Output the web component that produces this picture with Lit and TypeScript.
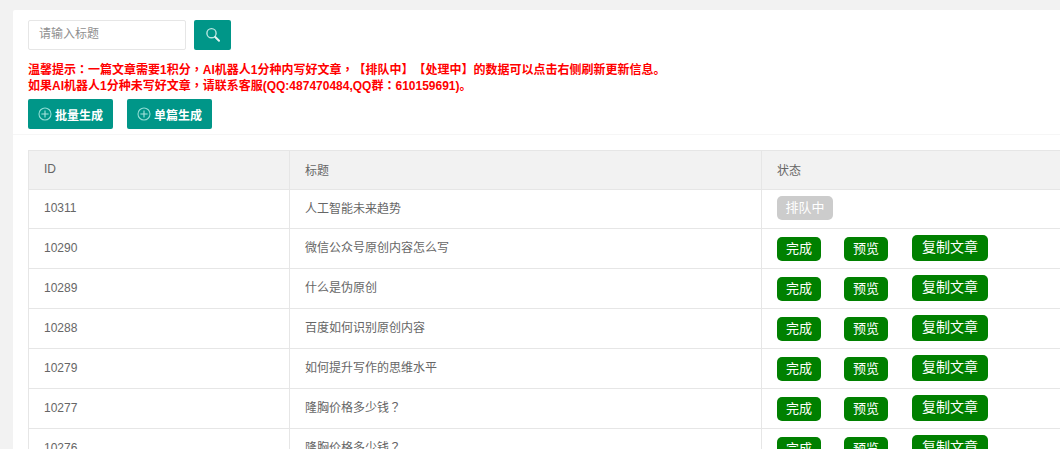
import { LitElement, html, css, svg } from "lit";
import { customElement } from "lit/decorators.js";

const rows: [string, string, boolean][] = [
  ["10311", "人工智能未来趋势", false],
  ["10290", "微信公众号原创内容怎么写", true],
  ["10289", "什么是伪原创", true],
  ["10288", "百度如何识别原创内容", true],
  ["10279", "如何提升写作的思维水平", true],
  ["10277", "隆胸价格多少钱", true],
  ["10276", "隆胸价格多少钱", true],
];

const plus = svg`<circle cx="7" cy="7" r="6" fill="none" stroke="#8fdcd4" stroke-width="1.1"/><path d="M7 3.4v7.2M3.4 7h7.2" stroke="#a8e4de" stroke-width="1.1"/>`;

@customElement("app-root")
export class AppRoot extends LitElement {
  static styles = css`
    :host {
      display: block;
      height: 449px;
      overflow: hidden;
      background: #f2f2f2;
      font-family: "Liberation Sans", "Noto Sans CJK SC", sans-serif;
      font-size: 12px;
      color: #666;
      text-spacing-trim: space-all;
    }
    .p { font-family: "Noto Sans CJK TC", sans-serif; line-height: 0; }
    .card {
      margin: 10px 0 0 13px;
      background: #fff;
      border-radius: 2px 0 0 0;
      height: 439px;
      overflow: hidden;
    }
    .head {
      padding: 10px 15px 5px;
      border-bottom: 1px solid #f6f6f6;
    }
    .search { display: flex; gap: 8px; }
    .input {
      box-sizing: border-box;
      width: 158px;
      height: 30px;
      padding-left: 10px;
      border: 1px solid #e6e6e6;
      border-radius: 2px;
      line-height: 27px;
      color: #8f8f8f;
    }
    .sbtn {
      width: 37px;
      height: 30px;
      background: #009688;
      border-radius: 2px;
      display: flex;
      align-items: center;
      justify-content: center;
    }
    .tip {
      margin: 12px 0 0;
      color: #f00;
      font-weight: bold;
      line-height: 16px;
      white-space: nowrap;
    }
    .actions { display: flex; gap: 14px; margin-top: 5px; }
    .add {
      box-sizing: border-box;
      width: 85px;
      height: 30px;
      background: #009688;
      border-radius: 2px;
      color: #fff;
      font-weight: bold;
      display: flex;
      align-items: center;
      padding-left: 10px;
      gap: 3px;
    }
    .add svg { flex: none; }
    .wrap { padding: 15px 0 0 15px; }
    table {
      width: 1100px;
      table-layout: fixed;
      border-collapse: collapse;
    }
    th, td {
      box-sizing: border-box;
      border: 1px solid #e6e6e6;
      padding: 0 15px 2px;
      text-align: left;
      font-weight: normal;
      white-space: nowrap;
    }
    th { background: #f2f2f2; height: 39px; }
    td { height: 40px; }
    tr.first td { height: 39px; }
    td.title { padding-bottom: 4px; }
    .ops { display: flex; align-items: flex-end; }
    .chip {
      box-sizing: border-box;
      height: 24px;
      width: 44px;
      border-radius: 5px;
      background: #008000;
      color: #fff;
      font-size: 13px;
      line-height: 24px;
      text-align: center;
    }
    .chip.gap { margin-left: 23px; }
    .chip.copy {
      width: 76px;
      height: 26px;
      line-height: 25px;
      font-size: 14px;
      margin-left: 24px;
    }
    .chip.wait { width: 56px; background: #ccc; }
  `;

  render() {
    return html`
      <div class="card">
        <div class="head">
          <div class="search">
            <div class="input">请输入标题</div>
            <div class="sbtn">
              <svg width="16" height="16" viewBox="0 0 16 16">
                <circle cx="6.5" cy="6.2" r="4.6" fill="none" stroke="#b8e6e1" stroke-width="1.4"/>
                <path d="M10.2 10 14 13.8" stroke="#e4f4f2" stroke-width="2" stroke-linecap="round"/>
              </svg>
            </div>
          </div>
          <p class="tip">温馨提示<span class="p">：</span>一篇文章需要1积分<span class="p">，</span>AI机器人1分种内写好文章<span class="p">，</span>【排队中】【处理中】的数据可以点击右侧刷新更新信息。<br />如果AI机器人1分种未写好文章<span class="p">，</span>请联系客服(QQ:487470484,QQ群<span class="p">：</span>610159691)。</p>
          <div class="actions">
            <div class="add"><svg width="14" height="14" viewBox="0 0 14 14">${plus}</svg>批量生成</div>
            <div class="add"><svg width="14" height="14" viewBox="0 0 14 14">${plus}</svg>单篇生成</div>
          </div>
        </div>
        <div class="wrap">
          <table>
            <colgroup><col style="width:261px" /><col style="width:472px" /><col /></colgroup>
            <thead><tr><th>ID</th><th>标题</th><th>状态</th></tr></thead>
            <tbody>
              ${rows.map(
                ([id, title, done], i) => html`
                  <tr class=${i === 0 ? "first" : ""}>
                    <td>${id}</td>
                    <td class="title">${title}${i >= 5 ? html`<span class="p">？</span>` : ""}</td>
                    <td>
                      ${done
                        ? html`<div class="ops">
                            <span class="chip">完成</span>
                            <span class="chip gap">预览</span>
                            <span class="chip copy">复制文章</span>
                          </div>`
                        : html`<div class="ops"><span class="chip wait">排队中</span></div>`}
                    </td>
                  </tr>
                `
              )}
            </tbody>
          </table>
        </div>
      </div>
    `;
  }
}
